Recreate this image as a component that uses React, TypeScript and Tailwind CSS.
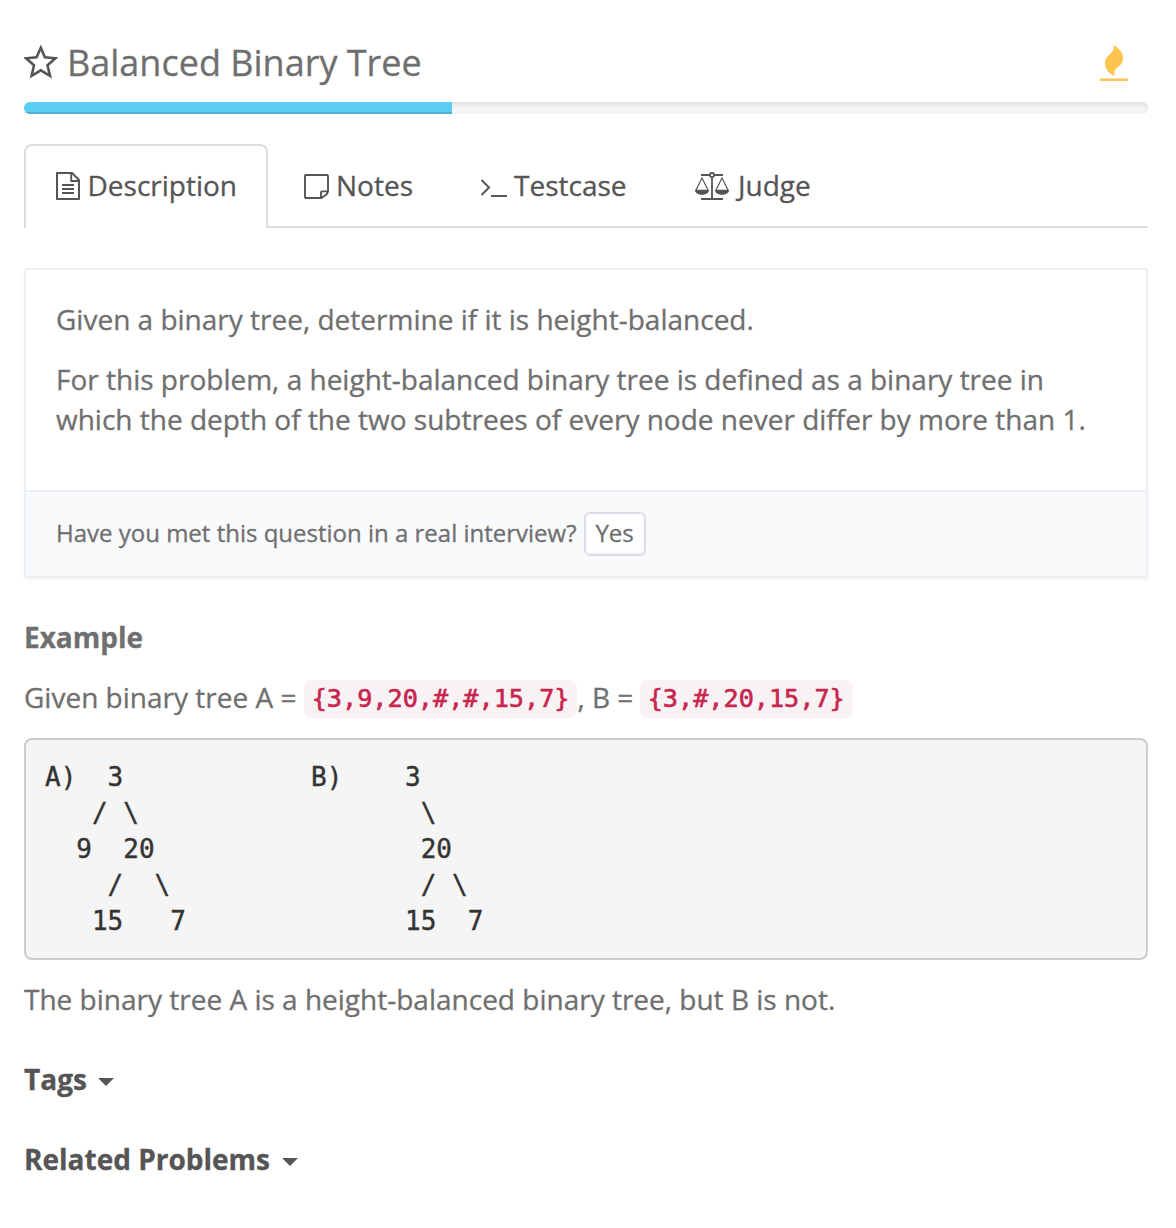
import React from "react";

const StarIcon = () => (
  <svg width="34" height="34" viewBox="0 0 34 34" fill="none" stroke="#555" strokeWidth="2.6" className="shrink-0">
    <path d="M16.8 2.8 L20.9 12.3 L31.4 13.3 L23.5 20.2 L26 30.8 L16.8 25.3 L7.6 30.8 L10 20.2 L2.1 13.3 L12.6 12.3 Z" />
  </svg>
);

const FireIcon = () => (
  <svg width="28" height="37" viewBox="0 0 28 37" fill="#fdc44f">
    <path d="M13.2 0 C20 3.5 23.3 8.2 23 13.8 C22.7 20.2 17.5 21.2 14.9 25.7 C13.9 27.5 14.2 29 14.9 31 C8.7 28.7 5 24 5 18.3 C5 12 9.9 10.2 12.6 6 C13.9 4 13.9 2 13.2 0 Z" />
    <path d="M0 33.5 H28 V36 H0 Z" />
  </svg>
);

const FileIcon = () => (
  <svg width="24" height="28" viewBox="0 0 24 28" fill="none" stroke="#555" strokeWidth="2" strokeLinejoin="round">
    <path d="M1 1 H16 L23 8 V27 H1 Z" />
    <path d="M15.2 1 V9 H23" strokeWidth="1.8" />
    <path d="M6 13 H18 M6 17 H18 M6 21 H18" strokeWidth="1.8" />
  </svg>
);

const NoteIcon = () => (
  <svg width="25" height="25" viewBox="0 0 25 25" fill="none" stroke="#555" strokeWidth="1.9" strokeLinejoin="round">
    <path d="M2 1 H23 Q24 1 24 2 V17.5 L22.5 20.5 L17.5 24 H2 Q1 24 1 23 V2 Q1 1 2 1 Z" />
    <path d="M17 24 V18.4 Q17 17.4 18 17.4 H24" />
  </svg>
);

const TerminalIcon = () => (
  <svg width="28" height="18" viewBox="0 0 28 18" fill="none" stroke="#555" strokeWidth="2">
    <path d="M1.5 1 L9 8.5 L1.5 16" />
    <path d="M11 17 H27" />
  </svg>
);

const ScaleIcon = () => (
  <svg width="34" height="28" viewBox="0 0 34 28" fill="none" stroke="#555" strokeWidth="1.8">
    <path d="M6 3 H14.7 M19.3 3 H28 M17 5.4 V26.6 M6 27 H28" />
    <circle cx="17" cy="2.9" r="2.1" />
    <path d="M1 18 L7 6 L13 18 M21 18 L27 6 L33 18" strokeWidth="1.2" />
    <path d="M0 17.8 H14 C14 21 10.8 22.8 7 22.8 C3.2 22.8 0 21 0 17.8 Z M20 17.8 H34 C34 21 30.8 22.8 27 22.8 C23.2 22.8 20 21 20 17.8 Z" fill="#555" stroke="none" />
  </svg>
);

const Caret = () => (
  <svg width="16" height="8" viewBox="0 0 16 8" fill="#555" className="mt-[5px]">
    <path d="M0 0 H16 L8 8 Z" />
  </svg>
);

const Code = ({ children }: { children: React.ReactNode }) => (
  <code className="mt-[3px] h-[38px] rounded-lg bg-[#f9f2f4] px-2 font-['DejaVu_Sans_Mono',monospace] text-[25.2px] leading-[38px] text-[#c7254e] [-webkit-text-stroke:0.6px]">
    {children}
  </code>
);

const trees = [
  "A)  3            B)    3 ",
  "   / \\                  \\",
  "  9  20                 20",
  "    /  \\                / \\",
  "   15   7              15  7",
].join("\n");

export default function App() {
  return (
    <main className="flex h-[1228px] w-[1176px] flex-col bg-white pr-7 pl-6 font-['Open_Sans',sans-serif] text-[28px] leading-10 text-[#6f6f6f] [-webkit-text-stroke:0.3px]">
      <header className="flex h-[102px] items-start justify-between pt-[38px] pr-5">
        <h1 className="flex gap-[9px] text-[36px] leading-[50px]">
          <span className="pt-[7px]"><StarIcon /></span>
          <span className="whitespace-nowrap">Balanced Binary Tree</span>
        </h1>
        <span className="pt-[7px]"><FireIcon /></span>
      </header>

      <div className="h-3 shrink-0 overflow-hidden rounded-[6px] bg-[#f5f5f5] shadow-[inset_0_2px_4px_rgba(0,0,0,0.1)]">
        <div className="h-full w-[428px] bg-[#5bcff3] shadow-[inset_0_-2px_0_rgba(0,0,0,0.15)]" />
      </div>

      <nav className="mt-[30px] flex h-[84px] shrink-0 border-b-2 border-[#ddd] text-[#555]">
        <div className="flex h-[84px] w-[244px] shrink-0 items-center gap-[7.5px] rounded-t-lg border-2 border-b-0 border-[#ddd] bg-white pb-0.5 pl-[30px]">
          <FileIcon /><span className="-mt-0.5">Description</span>
        </div>
        <div className="ml-9 flex w-[140px] items-center gap-[7px] pt-0.5"><NoteIcon /><span className="-mt-0.5">Notes</span></div>
        <div className="ml-9 flex w-[178px] items-center gap-1.5 pt-0.5"><span className="pt-1"><TerminalIcon /></span><span className="-mt-0.5">Testcase</span></div>
        <div className="ml-[37px] flex items-center gap-[9px] pt-0.5"><ScaleIcon /><span className="-mt-0.5">Judge</span></div>
      </nav>

      <section className="mt-10 h-[310px] shrink-0 rounded-[3px] border-2 border-[#ebeff5] shadow-[0_2px_3px_rgba(0,0,0,0.05)]">
        <div className="h-[220px] px-[30px] pt-[29px]">
          <p className="whitespace-nowrap">Given a binary tree, determine if it is height-balanced.</p>
          <p className="mt-5 whitespace-nowrap">For this problem, a height-balanced binary tree is defined as a binary tree in<br />which the depth of the two subtrees of every node never differ by more than 1.</p>
        </div>
        <div className="flex h-[86px] items-center border-t-2 border-[#ebeff5] bg-[#f9fafc] px-[30px] text-[24px]">
          <span className="-mt-0.5">Have you met this question in a real interview?</span>
          <button className="ml-[7px] flex h-11 w-[62px] items-center justify-center rounded-md border-2 border-[#dcdce9] bg-white pb-0.5 shadow-[inset_0_-2px_3px_rgba(0,0,0,0.04)]">Yes</button>
        </div>
      </section>

      <h2 className="mt-[39px] font-bold">Example</h2>
      <p className="mt-5 flex h-10 items-center whitespace-pre">
        <span>Given binary tree A = </span><Code>{"{3,9,20,#,#,15,7}"}</Code><span className="-mr-px">, B = </span><Code>{"{3,#,20,15,7}"}</Code>
      </p>
      <pre className="mt-[21px] h-[222px] shrink-0 rounded-lg border-2 border-[#ccc] bg-[#f5f5f5] px-[19px] pt-[19px] font-['DejaVu_Sans_Mono',monospace] text-[26px] leading-9 text-[#333] [-webkit-text-stroke:0.4px]">{trees}</pre>
      <p className="mt-[19px]">The binary tree A is a height-balanced binary tree, but B is not.</p>
      <h2 className="mt-10 flex items-center gap-[11px] font-bold text-[#555]">Tags <Caret /></h2>
      <h2 className="mt-10 flex items-center gap-3 font-bold text-[#555]">Related Problems <Caret /></h2>
    </main>
  );
}
